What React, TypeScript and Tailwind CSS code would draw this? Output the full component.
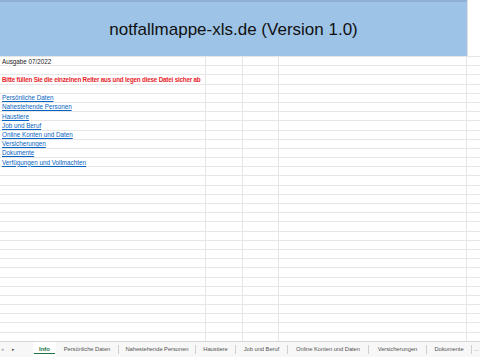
const rows: { text?: string; kind?: "plain" | "red" | "link" }[] = [
  { text: "Ausgabe 07/2022", kind: "plain" },
  {},
  { text: "Bitte füllen Sie die einzelnen Reiter aus und legen diese Datei sicher ab", kind: "red" },
  {},
  { text: "Persönliche Daten", kind: "link" },
  { text: "Nahestehende Personen", kind: "link" },
  { text: "Haustiere", kind: "link" },
  { text: "Job und Beruf", kind: "link" },
  { text: "Online Konten und Daten", kind: "link" },
  { text: "Versicherungen", kind: "link" },
  { text: "Dokumente", kind: "link" },
  { text: "Verfügungen und Vollmachten", kind: "link" },
];

while (rows.length < 31) rows.push({});

const tabs = [
  { name: "Persönliche Daten", w: "w-[63px]" },
  { name: "Nahestehende Personen", w: "w-[77px]" },
  { name: "Haustiere", w: "w-[40px]" },
  { name: "Job und Beruf", w: "w-[52px]" },
  { name: "Online Konten und Daten", w: "w-[81px]" },
  { name: "Versicherungen", w: "w-[58px]" },
  { name: "Dokumente", w: "w-[45px]" },
];

const textClass = {
  plain: "text-[#222]",
  red: "text-[#e8232a] font-bold tracking-[-0.2px]",
  link: "text-[#0563c1] underline",
};

export default function App() {
  return (
    <div className="w-[480px] h-[357px] flex flex-col overflow-hidden bg-white font-['Liberation_Sans',Arial,sans-serif]">
      {/* title band */}
      <div className="flex h-[56px] shrink-0">
        <div className="w-[467px] bg-[#9dc3e6] border-t-2 border-[#8fb0d4] flex items-center justify-center">
          <span className="text-[17px] text-[#111] leading-none">notfallmappe-xls.de (Version 1.0)</span>
        </div>
        <div className="flex-1 border-l border-[#e3e3e3]" />
      </div>

      {/* grid */}
      <div className="flex-1 flex flex-col overflow-hidden">
        {rows.map((row, i) => (
          <div key={i} className="flex h-[9.2px] shrink-0 border-t border-[#e6e6e6]">
            <div className="w-[206px] shrink-0 border-r border-[#e6e6e6] relative">
              {row.text && row.kind && (
                <span
                  className={`absolute left-[2px] top-[0.5px] whitespace-nowrap text-[6.3px] leading-[8px] ${textClass[row.kind]}`}
                >
                  {row.text}
                </span>
              )}
            </div>
            <div className="w-[37px] shrink-0 border-r border-[#e6e6e6]" />
            <div className="w-[36px] shrink-0 border-r border-[#e6e6e6]" />
            <div className="w-[188px] shrink-0 border-r border-[#e6e6e6]" />
            <div className="flex-1" />
          </div>
        ))}
      </div>

      {/* sheet tabs */}
      <div className="h-[16px] shrink-0 flex items-stretch border-t border-[#d6d6d6] bg-[#f7f7f7] text-[5.8px] text-[#555] tracking-[-0.05px]">
        <div className="w-[33px] shrink-0 flex items-center gap-[8px] pl-[1px]">
          <span className="text-[5px] text-[#aaa]">◂</span>
          <span className="text-[5px] text-[#555]">▸</span>
        </div>
        <div className="w-[23px] shrink-0 bg-white flex items-center justify-center relative">
          <span className="text-[#217346] font-bold text-[6px]">Info</span>
          <span className="absolute left-[1px] right-[1px] bottom-[3px] h-[1px] bg-[#217346]" />
        </div>
        {tabs.map((t) => (
          <div
            key={t.name}
            className={`${t.w} shrink-0 flex items-center justify-center border-r border-[#cfcfcf] my-[3px] whitespace-nowrap`}
          >
            {t.name}
          </div>
        ))}
        <div className="shrink-0 flex items-center pl-[2px] text-[5px] text-[#666]">…</div>
      </div>
    </div>
  );
}
